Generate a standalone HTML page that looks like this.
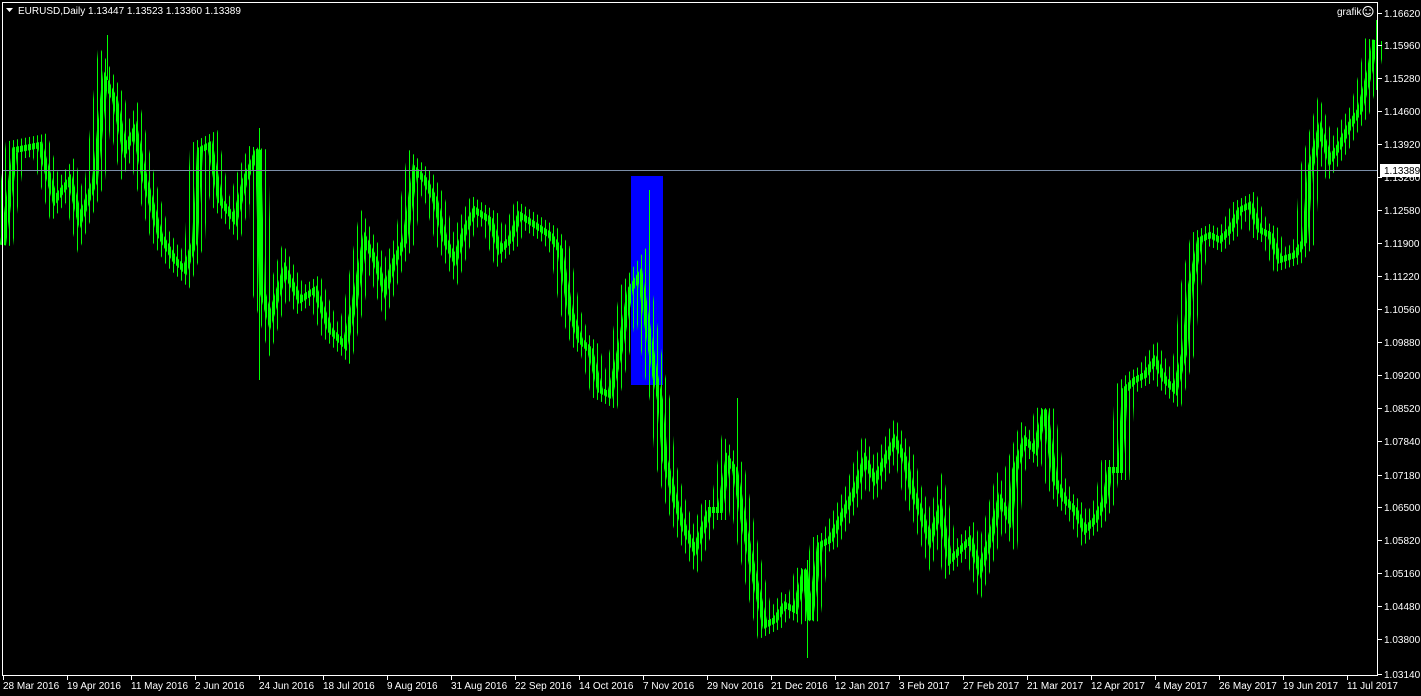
<!DOCTYPE html>
<html><head><meta charset="utf-8">
<style>
html,body{margin:0;padding:0;background:#000;overflow:hidden}
body{width:1421px;height:696px;position:relative}
svg{position:absolute;left:0;top:0}
</style></head>
<body>
<svg width="1421" height="696" xmlns="http://www.w3.org/2000/svg" font-family="Liberation Sans, sans-serif" font-size="10" fill="#fff">
<defs>
<pattern id="st" x="0" y="0" width="4" height="10" patternUnits="userSpaceOnUse">
<rect x="1" y="0" width="1" height="10" fill="#00ff00"/>
</pattern>
<pattern id="bd" x="0" y="0" width="4" height="10" patternUnits="userSpaceOnUse">
<rect x="0" y="0" width="3" height="10" fill="#00ff00"/>
</pattern>
</defs>
<rect x="631" y="176" width="32" height="209" fill="#0000ff"/>
<polyline fill="none" stroke="url(#st)" stroke-width="20" stroke-linejoin="miter" points="3,245 15,150 40,145 55,200 70,180 80,220 95,180 105,80 115,100 125,150 135,130 145,180 160,235 175,260 185,270 195,240 200,150 210,145 220,200 235,220 245,180 258,150 262,290 270,320 285,270 300,300 315,290 330,330 345,345 355,300 365,240 375,260 385,290 395,260 405,240 415,170 425,180 435,200 445,240 455,260 465,230 475,210 490,220 500,250 510,240 520,215 535,225 550,235 560,250 570,310 580,340 590,350 600,390 610,395 620,350 630,290 640,275 648,330 655,375 660,400 665,460 675,500 685,530 695,550 710,510 720,510 728,460 735,470 745,530 755,580 765,625 775,620 785,605 795,610 805,570 810,620 820,545 830,540 845,510 855,490 865,460 875,480 885,460 895,440 905,460 912,490 920,510 930,540 940,510 950,560 960,550 970,540 980,570 990,540 1000,500 1010,520 1015,470 1025,440 1035,450 1045,410 1055,480 1065,500 1075,510 1085,530 1095,520 1105,500 1110,470 1120,470 1125,390 1135,380 1145,375 1155,360 1165,380 1175,390 1185,350 1190,290 1200,240 1210,235 1220,240 1230,230 1240,210 1250,205 1260,230 1270,235 1280,260 1295,255 1305,240 1310,170 1320,130 1330,160 1340,145 1350,125 1360,110 1370,70 1375,40"/>
<polyline fill="none" stroke="url(#bd)" stroke-width="6" stroke-linejoin="miter" points="3,245 15,150 40,145 55,200 70,180 80,220 95,180 105,80 115,100 125,150 135,130 145,180 160,235 175,260 185,270 195,240 200,150 210,145 220,200 235,220 245,180 258,150 262,290 270,320 285,270 300,300 315,290 330,330 345,345 355,300 365,240 375,260 385,290 395,260 405,240 415,170 425,180 435,200 445,240 455,260 465,230 475,210 490,220 500,250 510,240 520,215 535,225 550,235 560,250 570,310 580,340 590,350 600,390 610,395 620,350 630,290 640,275 648,330 655,375 660,400 665,460 675,500 685,530 695,550 710,510 720,510 728,460 735,470 745,530 755,580 765,625 775,620 785,605 795,610 805,570 810,620 820,545 830,540 845,510 855,490 865,460 875,480 885,460 895,440 905,460 912,490 920,510 930,540 940,510 950,560 960,550 970,540 980,570 990,540 1000,500 1010,520 1015,470 1025,440 1035,450 1045,410 1055,480 1065,500 1075,510 1085,530 1095,520 1105,500 1110,470 1120,470 1125,390 1135,380 1145,375 1155,360 1165,380 1175,390 1185,350 1190,290 1200,240 1210,235 1220,240 1230,230 1240,210 1250,205 1260,230 1270,235 1280,260 1295,255 1305,240 1310,170 1320,130 1330,160 1340,145 1350,125 1360,110 1370,70 1375,40"/>
<line x1="649.5" y1="190" x2="649.5" y2="385" stroke="#00ff00"/>
<line x1="107.5" y1="35" x2="107.5" y2="80" stroke="#00ff00"/>
<line x1="259.5" y1="128" x2="259.5" y2="380" stroke="#00ff00"/>
<line x1="737.5" y1="398" x2="737.5" y2="470" stroke="#00ff00"/>
<line x1="807.5" y1="560" x2="807.5" y2="658" stroke="#00ff00"/>
<line x1="1376.5" y1="20" x2="1376.5" y2="90" stroke="#00ff00"/>
<line x1="2" y1="170.5" x2="1378" y2="170.5" stroke="#7b8ea8"/>
<rect x="2.5" y="2.5" width="1375" height="673" fill="none" stroke="#fff"/>
<g stroke="#fff">
<path d="M1378 13.5h4M1378 45.5h4M1378 78.5h4M1378 111.5h4M1378 144.5h4M1378 177.5h4M1378 210.5h4M1378 243.5h4M1378 276.5h4M1378 309.5h4M1378 342.5h4M1378 375.5h4M1378 408.5h4M1378 441.5h4M1378 475.5h4M1378 507.5h4M1378 540.5h4M1378 573.5h4M1378 606.5h4M1378 639.5h4M1378 674.5h4"/>
<path d="M3.5 676v4M67.5 676v4M131.5 676v4M195.5 676v4M259.5 676v4M323.5 676v4M387.5 676v4M451.5 676v4M515.5 676v4M579.5 676v4M643.5 676v4M707.5 676v4M771.5 676v4M835.5 676v4M899.5 676v4M963.5 676v4M1027.5 676v4M1091.5 676v4M1155.5 676v4M1219.5 676v4M1283.5 676v4M1347.5 676v4"/>
</g>
<text x="1384" y="17">1.16620</text><text x="1384" y="49">1.15960</text><text x="1384" y="82">1.15280</text><text x="1384" y="115">1.14600</text><text x="1384" y="148">1.13920</text><text x="1384" y="181">1.13260</text><text x="1384" y="214">1.12580</text><text x="1384" y="247">1.11900</text><text x="1384" y="280">1.11220</text><text x="1384" y="313">1.10560</text><text x="1384" y="346">1.09880</text><text x="1384" y="379">1.09200</text><text x="1384" y="412">1.08520</text><text x="1384" y="445">1.07840</text><text x="1384" y="479">1.07180</text><text x="1384" y="511">1.06500</text><text x="1384" y="544">1.05820</text><text x="1384" y="577">1.05160</text><text x="1384" y="610">1.04480</text><text x="1384" y="643">1.03800</text><text x="1384" y="678">1.03140</text>
<rect x="1380" y="164" width="40" height="13" fill="#fff"/><text x="1384" y="174" fill="#000">1.13389</text>
<text x="3" y="689">28 Mar 2016</text><text x="67" y="689">19 Apr 2016</text><text x="131" y="689">11 May 2016</text><text x="195" y="689">2 Jun 2016</text><text x="259" y="689">24 Jun 2016</text><text x="323" y="689">18 Jul 2016</text><text x="387" y="689">9 Aug 2016</text><text x="451" y="689">31 Aug 2016</text><text x="515" y="689">22 Sep 2016</text><text x="579" y="689">14 Oct 2016</text><text x="643" y="689">7 Nov 2016</text><text x="707" y="689">29 Nov 2016</text><text x="771" y="689">21 Dec 2016</text><text x="835" y="689">12 Jan 2017</text><text x="899" y="689">3 Feb 2017</text><text x="963" y="689">27 Feb 2017</text><text x="1027" y="689">21 Mar 2017</text><text x="1091" y="689">12 Apr 2017</text><text x="1155" y="689">4 May 2017</text><text x="1219" y="689">26 May 2017</text><text x="1283" y="689">19 Jun 2017</text><text x="1347" y="689">11 Jul 2017</text>
<path d="M6 8 L13 8 L9.5 12 Z" fill="#fff"/>
<text x="18" y="14">EURUSD,Daily  1.13447 1.13523 1.13360 1.13389</text>
<text x="1337" y="15">grafik</text>
<circle cx="1368" cy="11.5" r="5" fill="none" stroke="#fff"/><circle cx="1366" cy="10" r="0.8"/><circle cx="1370" cy="10" r="0.8"/><path d="M1365.5 13 Q1368 15.5 1370.5 13" fill="none" stroke="#fff"/>
</svg>
</body></html>
